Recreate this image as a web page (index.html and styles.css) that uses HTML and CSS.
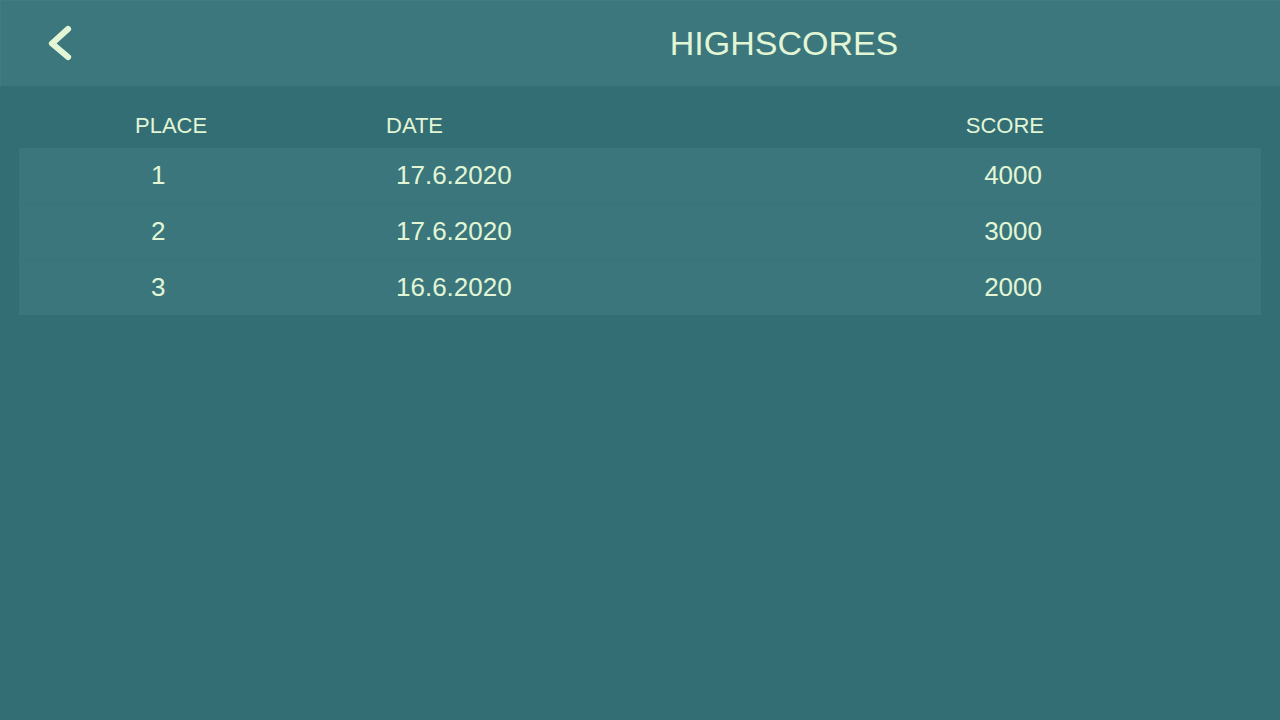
FILE: index.html
```html
<!DOCTYPE html>
<html lang="en">
<head>
<meta charset="UTF-8">
<meta name="viewport" content="width=device-width, initial-scale=1.0">
<title>Highscores</title>
<link rel="stylesheet" href="styles.css">
</head>
<body>

<div class="topbar">
    <div class="back-cell">
        <button class="back-button" aria-label="Back">
            <svg width="24" height="36" viewBox="0 0 24 36">
                <polyline points="20,4 4,18.5 20,32" fill="none" stroke="currentColor" stroke-width="6.2" stroke-linecap="round" stroke-linejoin="round"/>
            </svg>
        </button>
    </div>
    <h1 class="title">HIGHSCORES</h1>
</div>

<div class="scores">
    <div class="score-head">
        <div class="col-place">PLACE</div>
        <div class="col-date">DATE</div>
        <div class="col-score">SCORE</div>
    </div>
    <div class="score-list" id="scoreList"></div>
</div>

<script>
var scores = [
    { place: 1, date: '17.6.2020', score: 4000 },
    { place: 2, date: '17.6.2020', score: 3000 },
    { place: 3, date: '16.6.2020', score: 2000 }
];

function renderScores() {
    var list = document.getElementById('scoreList');
    list.innerHTML = '';
    for (var i = 0; i < scores.length; i++) {
        var row = document.createElement('div');
        row.className = 'score-row';
        row.innerHTML = '<div class="col-place">' + scores[i].place + '</div>' +
            '<div class="col-date">' + scores[i].date + '</div>' +
            '<div class="col-score">' + scores[i].score + '</div>';
        list.appendChild(row);
    }
}

renderScores();
</script>

</body>
</html>
```

FILE: styles.css
```css
body {
    font-family: "Liberation Sans", Arial, sans-serif;
    margin: 0;
    padding: 0;
    background-color: #336e75;
    color: #e2f6d6;
    height: 720px;
}

.topbar {
    display: grid;
    grid-template-columns: 288px 1fr;
    align-items: center;
    height: 86px;
    background-color: #3b777d;
    box-shadow: inset 1px 1px 0 rgba(255, 255, 255, 0.04);
}

.back-cell {
    padding-left: 48px;
}

.back-button {
    display: block;
    width: 24px;
    height: 36px;
    padding: 0;
    border: none;
    background: none;
    color: #e2f6d6;
    cursor: pointer;
}

.back-button svg {
    display: block;
}

.title {
    margin: 0;
    font-size: 34px;
    font-weight: normal;
    text-align: center;
}

.scores {
    margin: 0 19px;
}

.score-head,
.score-row {
    display: grid;
    grid-template-columns: 367px 1fr 120px;
    padding-right: 217px;
}

.score-head {
    height: 62px;
    box-sizing: border-box;
    padding-top: 27px;
    font-size: 22px;
}

.score-head .col-place {
    padding-left: 116px;
}

.score-row {
    align-items: center;
    height: 55px;
    font-size: 26px;
    background-color: #3b767c;
    border-bottom: 1px solid #37717a;
}

.score-row:last-child {
    border-bottom: none;
}

.score-row .col-place {
    padding-left: 132px;
}

.score-row .col-date {
    padding-left: 10px;
}

.col-score {
    text-align: right;
}

.score-row .col-score {
    padding-right: 2px;
}
```
